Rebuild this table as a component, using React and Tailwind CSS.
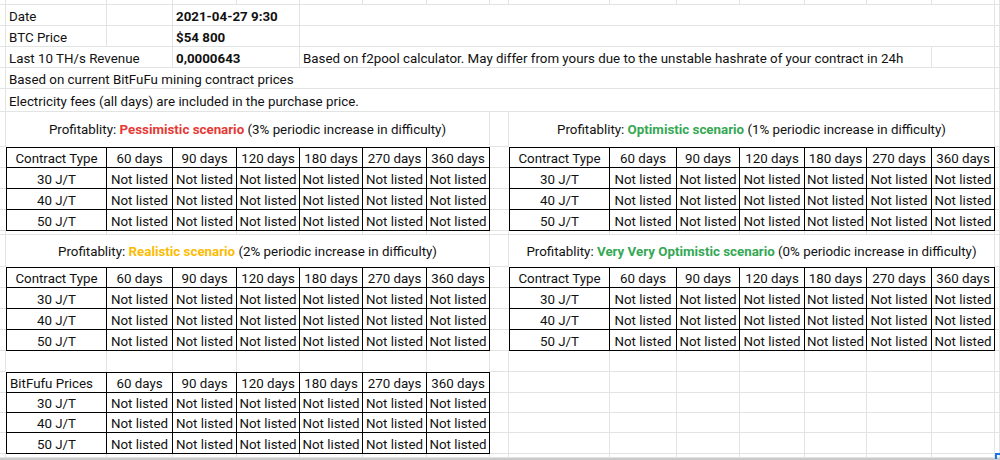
import React from 'react';

const days = ['60 days', '90 days', '120 days', '180 days', '270 days', '360 days'];
const types = ['30 J/T', '40 J/T', '50 J/T'];
const notListed = Array(6).fill('Not listed');

const Cell = ({ span = '', className = 'items-end pb-px', children }) => (
    <div className={`flex whitespace-nowrap border-r border-b ${span} ${className}`}>
        {children}
    </div>
);

// empty spreadsheet cell with light gridlines
const blank = (k, cls = '') => <Cell key={k} className={`border-[#e2e3e3] ${cls}`} />;

const gridRow = (k, cls = '') => Array.from({ length: 17 }, (_, i) => blank(`${k}-${i}`, cls));

// one row of a bordered table, 7 cells wide
const tbl = (k, label, vals, top, alignLeft) => [
    <Cell
        key={`${k}-l`}
        className={`items-end pb-px border-black border-l ${top ? 'border-t' : ''} ${alignLeft ? 'justify-start px-[3px]' : 'justify-center'}`}
    >
        {label}
    </Cell>,
    ...vals.map((v, i) => (
        <Cell key={`${k}-${i}`} className={`items-end pb-px border-black justify-center ${top ? 'border-t' : ''}`}>
            {v}
        </Cell>
    )),
];

const Title = ({ color, name, pct }) => (
    <Cell span="col-span-7" className="border-[#e2e3e3] border-b-0 items-center justify-center">
        <span>
            Profitablity: <span className={`font-bold ${color}`}>{name}</span> ({pct} periodic increase in difficulty)
        </span>
    </Cell>
);

const pairRows = (k) => [
    [blank(`${k}h0`, 'border-r-0'), ...tbl(`${k}hl`, 'Contract Type', days, true), blank(`${k}hg`, 'border-r-0'), ...tbl(`${k}hr`, 'Contract Type', days, true), blank(`${k}hp`)],
    ...types.map((t, r) => [
        blank(`${k}${r}0`, 'border-r-0'),
        ...tbl(`${k}${r}l`, t, notListed, false),
        blank(`${k}${r}g`, 'border-r-0'),
        ...tbl(`${k}${r}r`, t, notListed, false),
        blank(`${k}${r}p`),
    ]),
];

const txt = 'items-end pb-px px-[3px] border-[#e2e3e3]';

const App = () => {
    return (
        <div className="relative w-[1000px] h-[460px] overflow-hidden bg-white font-[Roboto,Arial,sans-serif] text-[13.33px] leading-[15px] text-[#111]">
            <div className="grid grid-cols-[6px_101px_66px_64px_63px_63px_64px_63px_19px_101px_67px_63px_65px_62px_65px_63px_5px] grid-rows-[5px_21px_21px_21px_21px_23px_35px_21px_21px_21px_21px_4px_32px_21px_21px_21px_21px_21px_21px_20px_20px_21px_4px]">
                {gridRow('r0')}

                {blank('d0')}
                <Cell className={txt}>Date</Cell>
                {blank('d2')}
                <Cell span="col-span-2" className={`${txt} font-bold`}>2021-04-27 9:30</Cell>
                {blank('d4', 'col-span-11')}
                {blank('d5')}

                {blank('b0')}
                <Cell className={txt}>BTC Price</Cell>
                {blank('b2')}
                <Cell span="col-span-2" className={`${txt} font-bold`}>$54 800</Cell>
                {blank('b4', 'col-span-11')}
                {blank('b5')}

                {blank('l0')}
                <Cell span="col-span-2" className={txt}>Last 10 TH/s Revenue</Cell>
                <Cell span="col-span-2" className={`${txt} font-bold`}>0,0000643</Cell>
                <Cell span="col-span-10" className={txt}>
                    Based on f2pool calculator. May differ from yours due to the unstable hashrate of your contract in 24h
                </Cell>
                {blank('l4')}
                {blank('l5')}

                {blank('c0')}
                <Cell span="col-span-15" className={txt}>Based on current BitFuFu mining contract prices</Cell>
                {blank('c2')}

                {blank('e0')}
                <Cell span="col-span-15" className="items-end pb-[2px] px-[3px] border-[#e2e3e3]">
                    Electricity fees (all days) are included in the purchase price.
                </Cell>
                {blank('e2')}

                {blank('t0')}
                <Title color="text-[#e53935]" name="Pessimistic scenario" pct="3%" />
                {blank('t1')}
                <Title color="text-[#34a853]" name="Optimistic scenario" pct="1%" />
                {blank('t2')}

                {pairRows('a')}

                {gridRow('s1')}

                {blank('u0')}
                <Title color="text-[#fbbc04]" name="Realistic scenario" pct="2%" />
                {blank('u1')}
                <Title color="text-[#34a853]" name="Very Very Optimistic scenario" pct="0%" />
                {blank('u2')}

                {pairRows('b')}

                {blank('x0')}
                {Array.from({ length: 7 }, (_, i) => blank(`x1-${i}`, 'border-b-0'))}
                {Array.from({ length: 9 }, (_, i) => blank(`x2-${i}`))}

                {blank('f0', 'border-r-0')}
                {tbl('fh', 'BitFufu Prices', days, true, true)}
                {Array.from({ length: 9 }, (_, i) => blank(`fh-${i}`))}
                {types.map((t, r) => [
                    blank(`f${r}0`, 'border-r-0'),
                    ...tbl(`f${r}`, t, notListed, false),
                    ...Array.from({ length: 9 }, (_, i) => blank(`f${r}-${i}`)),
                ])}

                {gridRow('z')}
            </div>
            <div className="h-[2px] bg-[#c9c9c9]" />
            <div className="absolute left-[995px] top-[453px] w-[6px] h-[6px] border-l-2 border-t-2 border-[#1a73e8]" />
        </div>
    );
};

export default App;
